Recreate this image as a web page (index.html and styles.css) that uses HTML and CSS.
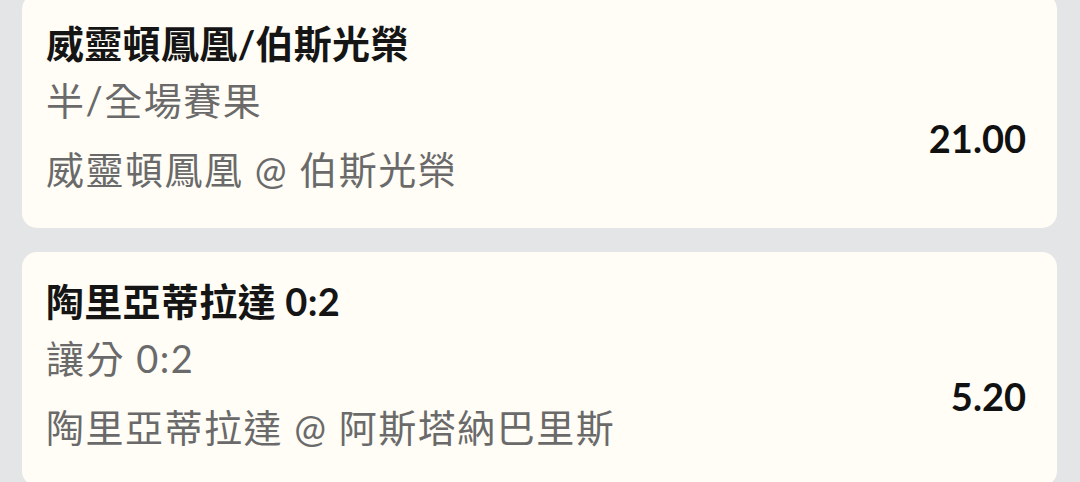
FILE: index.html
```html
<!DOCTYPE html>
<html>
  <head>
    <title>Bet Slip</title>
    <meta name="viewport" content="width=device-width, initial-scale=1"/>
    <link rel="stylesheet" href="styles.css">
  </head>
  <body>
    <div class='slip-list'>
      <div class='slip'>
        <div class='slip-title'>威靈頓鳳凰/伯斯光榮</div>
        <div class='slip-pool'>半/全場賽果</div>
        <div class='slip-match'>威靈頓鳳凰 @ 伯斯光榮</div>
        <div class='slip-odds'>21.00</div>
      </div>

      <div class='slip'>
        <div class='slip-title'>陶里亞蒂拉達 0:2</div>
        <div class='slip-pool'>讓分 0:2</div>
        <div class='slip-match'>陶里亞蒂拉達 @ 阿斯塔納巴里斯</div>
        <div class='slip-odds'>5.20</div>
      </div>
    </div>
  </body>
</html>
```

FILE: styles.css
```css
* {box-sizing: border-box;}

html {
  background-color: #e4e5e7;
}

body {
  margin: 0;
  overflow: hidden;
  font-family: Lato, "Noto Sans CJK TC", sans-serif;
  font-size: 38px;
}

.slip-list {
  display: flex;
  flex-direction: column;
  gap: 24px;
  margin-top: -6px;
  padding: 0 23px 0 22px;
}

.slip {
  display: grid;
  grid-template-columns: 1fr auto;
  grid-template-rows: auto auto auto;
  padding: 21px 31px 30px 24px;
  background-color: #fffdf6;
  border-radius: 15px;
}

.slip-title {
  grid-column: 1;
  line-height: 57px;
  font-weight: bold;
  letter-spacing: 0.3px;
  color: #151515;
}

.slip-pool,
.slip-match {
  grid-column: 1;
  line-height: 57px;
  letter-spacing: 1.5px;
  color: #6a6a6a;
}

.slip-match {
  margin-top: 12px;
}

.slip-odds {
  grid-column: 2;
  grid-row: 2 / 4;
  align-self: center;
  padding-top: 5px;
  font-weight: bold;
  color: #111;
}
```
